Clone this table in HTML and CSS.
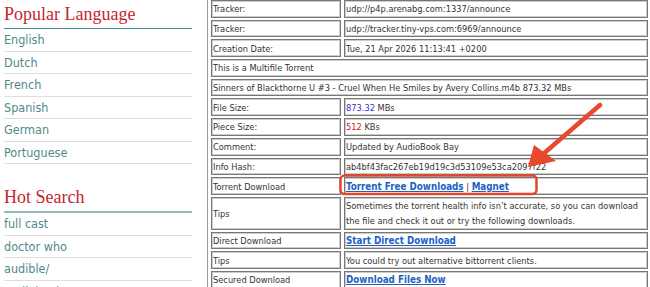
FILE: index.html
```html
<!DOCTYPE html>
<html lang="en">
<head>
<meta charset="utf-8">
<title>Torrent details</title>
<link rel="stylesheet" href="styles.css">
</head>
<body>
<div class="page">
  <aside class="sidebar">
    <h2 class="side-title">Popular Language</h2>
    <ul class="side-list">
      <li><a href="#">English</a></li>
      <li><a href="#">Dutch</a></li>
      <li><a href="#">French</a></li>
      <li><a href="#">Spanish</a></li>
      <li><a href="#">German</a></li>
      <li><a href="#">Portuguese</a></li>
    </ul>
    <h2 class="side-title hot">Hot Search</h2>
    <ul class="side-list">
      <li><a href="#">full cast</a></li>
      <li><a href="#">doctor who</a></li>
      <li><a href="#">audible/</a></li>
      <li><a href="#">audiobook</a></li>
    </ul>
  </aside>
  <main class="main">
    <table class="info">
      <tr><td class="k">Tracker:</td><td class="v">udp://p4p.arenabg.com:1337/announce</td></tr>
      <tr><td class="k">Tracker:</td><td class="v">udp://tracker.tiny-vps.com:6969/announce</td></tr>
      <tr><td class="k">Creation Date:</td><td class="v">Tue, 21 Apr 2026 11:13:41 +0200</td></tr>
      <tr><td colspan="2">This is a Multifile Torrent</td></tr>
      <tr><td colspan="2">Sinners of Blackthorne U #3 - Cruel When He Smiles by Avery Collins.m4b 873.32 MBs</td></tr>
      <tr><td class="k">File Size:</td><td class="v"><span class="num-blue">873.32</span> MBs</td></tr>
      <tr><td class="k">Piece Size:</td><td class="v"><span class="num-red">512</span> KBs</td></tr>
      <tr><td class="k">Comment:</td><td class="v">Updated by AudioBook Bay</td></tr>
      <tr><td class="k">Info Hash:</td><td class="v">ab4bf43fac267eb19d19c3d53109e53ca2097f22</td></tr>
      <tr><td class="k">Torrent Download</td><td class="v"><a class="dl" href="#">Torrent Free Downloads</a> | <a class="dl" href="#">Magnet</a></td></tr>
      <tr><td class="k">Tips</td><td class="v wrap">Sometimes the torrent health info isn’t accurate, so you can download the file and check it out or try the following downloads.</td></tr>
      <tr><td class="k">Direct Download</td><td class="v"><a class="dl" href="#">Start Direct Download</a></td></tr>
      <tr><td class="k">Tips</td><td class="v">You could try out alternative bittorrent clients.</td></tr>
      <tr><td class="k">Secured Download</td><td class="v"><a class="dl" href="#">Download Files Now</a></td></tr>
    </table>
  </main>
</div>
<svg class="annot" width="650" height="287" viewBox="0 0 650 287" aria-hidden="true">
  <rect x="340.5" y="175.5" width="196" height="18.5" rx="4" ry="4" fill="none" stroke="#e4462c" stroke-width="2.5"/>
  <line x1="600" y1="105" x2="542" y2="155" stroke="#e8482c" stroke-width="4.5" stroke-linecap="round"/>
  <polygon points="528,167 534,145 556,161" fill="#e8482c"/>
</svg>
</body>
</html>
```
FILE: styles.css
```css
html, body {
  margin: 0;
  padding: 0;
  background: #ffffff;
  overflow: hidden;
}

.page {
  display: flex;
  align-items: flex-start;
  width: 650px;
  height: 287px;
  overflow: hidden;
}

.sidebar {
  flex: none;
  width: 188px;
  margin-left: 4px;
  font-family: "DejaVu Sans Condensed", "DejaVu Sans", sans-serif;
  font-stretch: condensed;
}

.side-title {
  margin: 3px 0 0;
  padding-bottom: 3px;
  font-family: "Liberation Serif", serif;
  font-weight: 400;
  font-size: 18px;
  line-height: 22px;
  color: #c4262d;
  border-bottom: 1px solid #4a8c8c;
}

.side-title.hot {
  margin-top: 22px;
  border-bottom: 2px solid #8fbdbb;
}

.side-list {
  list-style: none;
  margin: 0;
  padding: 0;
}

.side-list li {
  font-size: 12.5px;
  line-height: 21.5px;
  border-bottom: 1px solid #dedede;
  color: #4f8a8a;
}

.side-list a {
  color: inherit;
  text-decoration: none;
}

.main {
  flex: none;
  margin-left: 15px;
  margin-top: -3px;
}

.info {
  border: 1px solid #9a9a9a;
  border-spacing: 3px 2px;
  font-family: "DejaVu Sans Condensed", "DejaVu Sans", sans-serif;
  font-stretch: condensed;
  font-size: 9.2px;
  color: #333333;
}

.info td {
  border: 1px solid #777777;
  box-shadow: inset 0 0 0 1px #cccccc;
  padding: 0.35px 1px 0.35px 1px;
  line-height: 15px;
  vertical-align: middle;
  white-space: nowrap;
}

.info .k {
  width: 126px;
}

.info .v {
  width: 300px;
}

.info .wrap {
  white-space: normal;
}

.num-blue {
  color: #3232cc;
}

.num-red {
  color: #cc1414;
}

.dl {
  font-weight: 700;
  font-size: 9.75px;
  color: #1e5fc4;
  text-decoration: underline;
}

.annot {
  position: absolute;
  left: 0;
  top: 0;
  pointer-events: none;
}
```
